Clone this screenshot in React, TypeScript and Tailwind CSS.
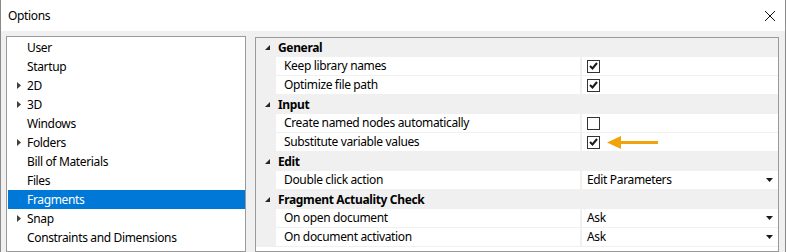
import React from 'react'

const font = { fontFamily: '"Noto Sans", "Open Sans", sans-serif' }

const treeItems = [
    { label: 'User' },
    { label: 'Startup' },
    { label: '2D', expand: true },
    { label: '3D', expand: true },
    { label: 'Windows' },
    { label: 'Folders', expand: true },
    { label: 'Bill of Materials' },
    { label: 'Files' },
    { label: 'Fragments', selected: true },
    { label: 'Snap', expand: true },
    { label: 'Constraints and Dimensions' },
]

type Prop = { name: string; check?: boolean; value?: string; arrow?: boolean }
type Group = { title: string; props: Prop[] }

const groups: Group[] = [
    { title: 'General', props: [{ name: 'Keep library names', check: true }, { name: 'Optimize file path', check: true }] },
    { title: 'Input', props: [{ name: 'Create named nodes automatically', check: false }, { name: 'Substitute variable values', check: true, arrow: true }] },
    { title: 'Edit', props: [{ name: 'Double click action', value: 'Edit Parameters' }] },
    { title: 'Fragment Actuality Check', props: [{ name: 'On open document', value: 'Ask' }, { name: 'On document activation', value: 'Ask' }] },
]

function Checkbox({ checked }: { checked: boolean }) {
    return (
        <div className="w-[13px] h-[13px] border border-[#333333] bg-white flex items-center justify-center">
            {checked && (
                <svg width="9" height="8" viewBox="0 0 9 8">
                    <path d="M1 4 L3.5 6.5 L8 1" fill="none" stroke="#1a1a1a" strokeWidth="2" />
                </svg>
            )}
        </div>
    )
}

function App() {
    return (
        <div className="w-[786px] h-[252px] overflow-hidden bg-white flex flex-col border-x border-[#8a8a8a] text-[12px] tracking-[-0.35px] text-black" style={font}>
            <div className="h-[31px] flex items-center justify-between pl-[7px] pr-[9px] shrink-0">
                <span>Options</span>
                <svg width="12" height="12" viewBox="0 0 12 12">
                    <path d="M1 1 L11 11 M11 1 L1 11" stroke="#111" strokeWidth="1" />
                </svg>
            </div>
            <div className="flex-1 bg-[#f0f0f0] flex pt-[5px] pl-[5px] min-h-0">
                <div className="w-[240px] border border-[#9a9a9a] bg-white pt-[1px] pl-[1px] shrink-0">
                    {treeItems.map((it) => (
                        <div key={it.label} className={'h-[19px] flex items-center ' + (it.selected ? 'bg-[#0078d7] text-white' : '')}>
                            <div className="w-[19px] flex justify-end pr-[6px]">
                                {it.expand && (
                                    <svg width="4" height="7" viewBox="0 0 4 7">
                                        <path d="M0 0 L4 3.5 L0 7 Z" fill="#404040" />
                                    </svg>
                                )}
                            </div>
                            <span>{it.label}</span>
                        </div>
                    ))}
                </div>
                <div className="ml-[9px] mt-[1px] w-[524px] border border-[#9a9a9a] bg-white shrink-0">
                    {groups.map((g) => (
                        <div key={g.title}>
                            <div className="h-[19px] flex items-center bg-[#f0f0f0]">
                                <div className="w-[22px] flex justify-center">
                                    <svg width="5" height="5" viewBox="0 0 5 5">
                                        <path d="M5 0 L5 5 L0 5 Z" fill="#262626" />
                                    </svg>
                                </div>
                                <span className="font-bold">{g.title}</span>
                            </div>
                            {g.props.map((p) => (
                                <div key={p.name} className="h-[19px] flex">
                                    <div className="w-[20px] bg-[#f0f0f0]" />
                                    <div className="w-[304px] flex items-center pl-[8px] border-b border-[#f0f0f0]">{p.name}</div>
                                    <div className="flex-1 flex items-center border-l-2 border-b border-[#f0f0f0] pl-[5px] pr-[5px]">
                                        {p.check !== undefined && (
                                            <div className="flex items-center">
                                                <Checkbox checked={p.check} />
                                                {p.arrow && (
                                                    <svg width="52" height="13" viewBox="0 0 52 13" className="ml-[7px]">
                                                        <path d="M0 6.5 L14 0 L14 13 Z" fill="#f0a30a" />
                                                        <path d="M12 6.5 L51 6.5" stroke="#f0a30a" strokeWidth="3" />
                                                    </svg>
                                                )}
                                            </div>
                                        )}
                                        {p.value && (
                                            <div className="flex-1 flex items-center justify-between">
                                                <span>{p.value}</span>
                                                <svg width="7" height="4" viewBox="0 0 7 4">
                                                    <path d="M0 0 L7 0 L3.5 4 Z" fill="#1a1a1a" />
                                                </svg>
                                            </div>
                                        )}
                                    </div>
                                </div>
                            ))}
                        </div>
                    ))}
                </div>
            </div>
        </div>
    )
}

export default App
